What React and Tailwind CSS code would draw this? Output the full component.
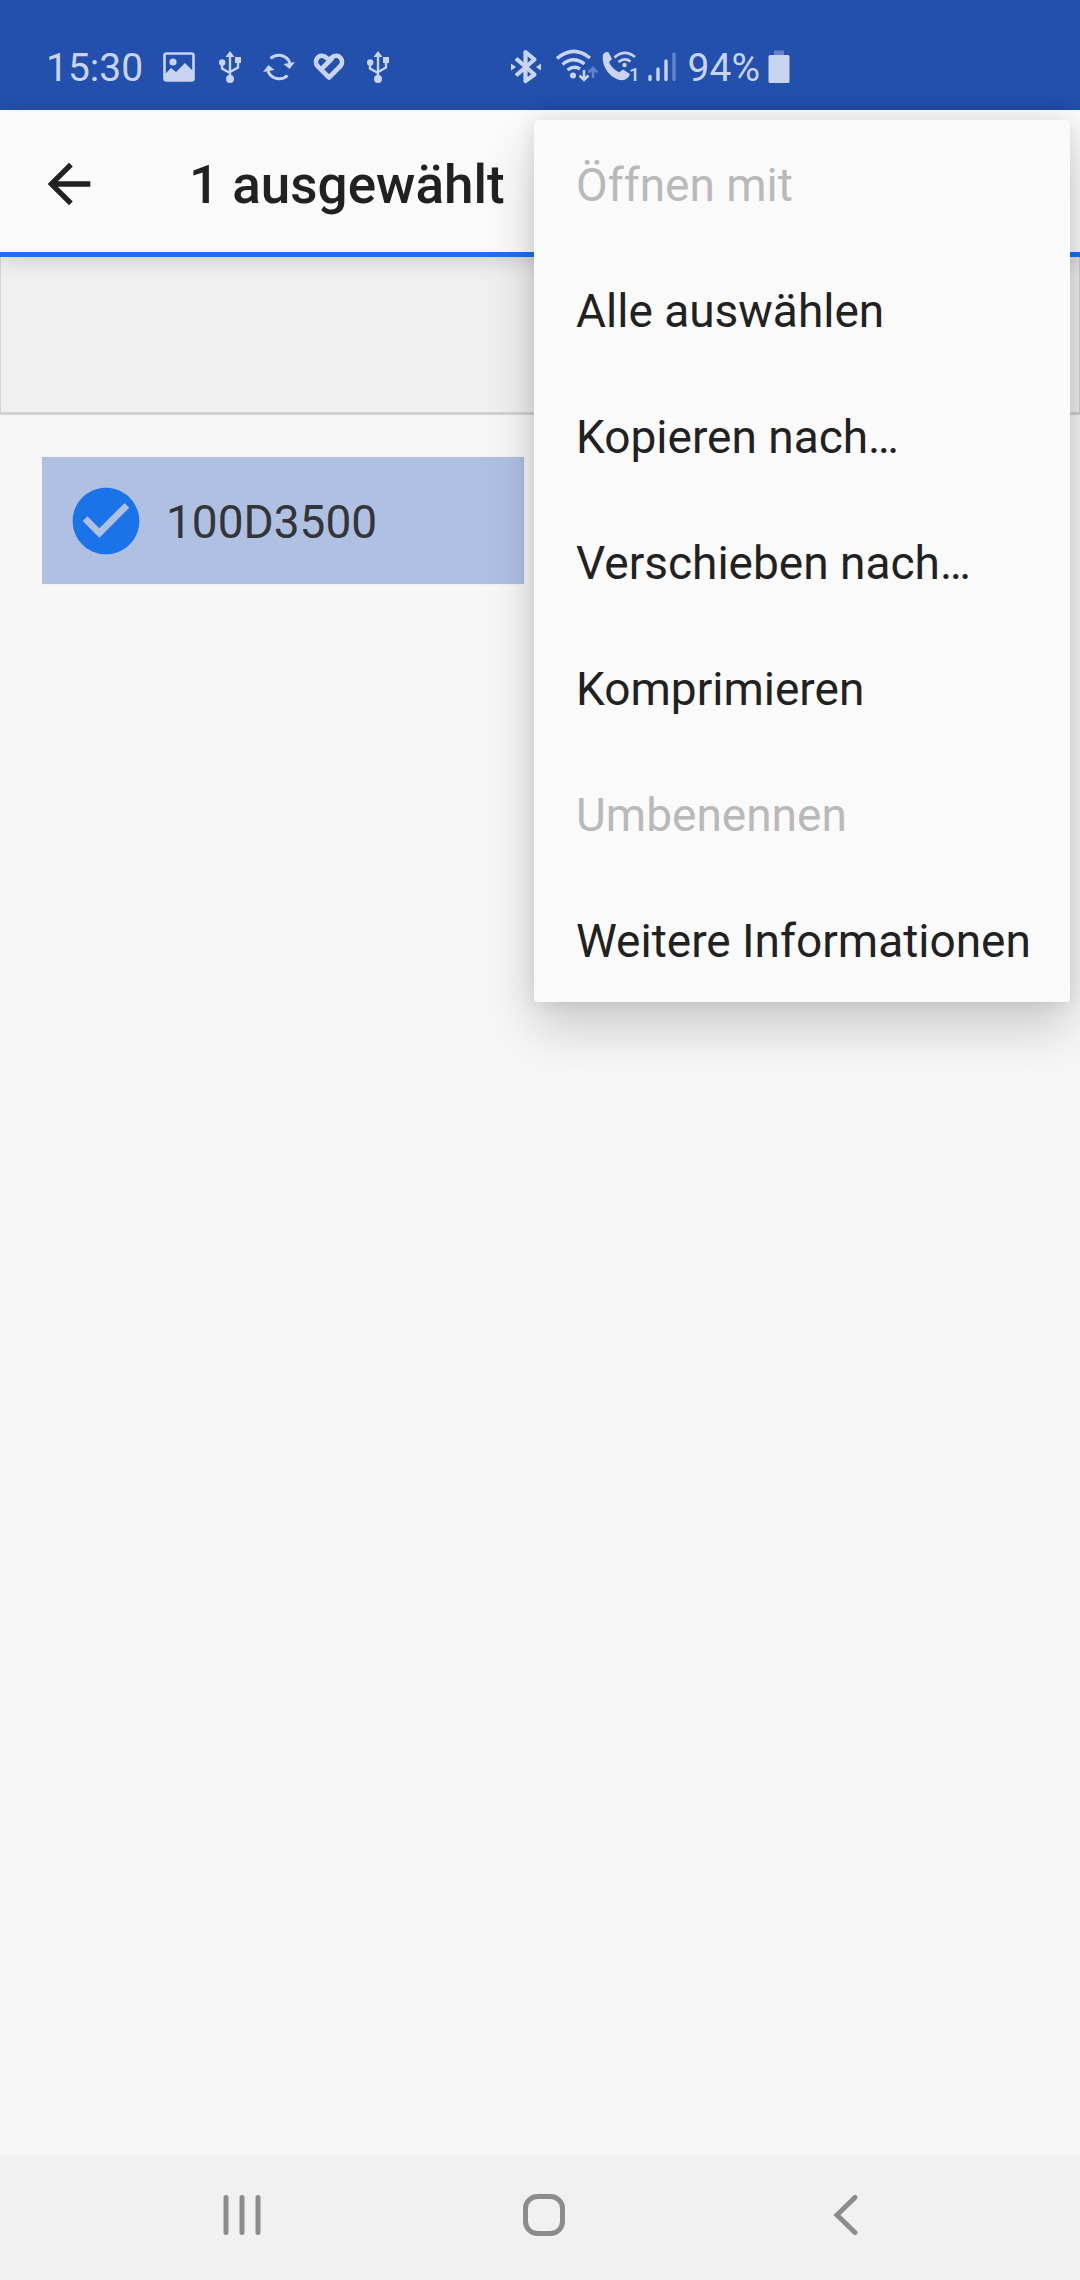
import React from "react";

const menuItems = [
  { label: "Öffnen mit", disabled: true },
  { label: "Alle auswählen" },
  { label: "Kopieren nach…" },
  { label: "Verschieben nach…" },
  { label: "Komprimieren" },
  { label: "Umbenennen", disabled: true },
  { label: "Weitere Informationen" },
];

function StatusIcon({ width, label, children }) {
  return (
    <svg width={width} height="36" viewBox={`0 0 ${width} 36`} fill="none" role="img" aria-label={label} className="shrink-0">
      {children}
    </svg>
  );
}

function ImageIcon() {
  return (
    <StatusIcon width={32} label="Bild">
      <rect x="1.5" y="4.5" width="29" height="27" rx="2" stroke="currentColor" strokeWidth="2.6" />
      <circle cx="10" cy="13" r="3.6" fill="currentColor" />
      <path d="M1 26l7-7 5 4 9-9 9 9v9H1z" fill="currentColor" />
    </StatusIcon>
  );
}

function UsbIcon() {
  return (
    <StatusIcon width={22} label="USB">
      <path d="M11 4v26M3 13v6.500l8 4.500M19 12v6.500L11 23" stroke="currentColor" strokeWidth="2.4" />
      <path d="M11 2l4.500 6h-9z" fill="currentColor" />
      <circle cx="3.2" cy="13.500" r="3.2" fill="currentColor" />
      <path d="M16 8h6v6h-6z" fill="currentColor" />
      <circle cx="11" cy="30" r="4" fill="currentColor" />
    </StatusIcon>
  );
}

function SyncIcon() {
  return (
    <StatusIcon width={32} label="Synchronisierung">
      <path d="M7.500 9.500A12 12 0 0 1 27 14M24.500 26.500A12 12 0 0 1 5 22" stroke="currentColor" strokeWidth="3" />
      <path d="M20.500 15L32 13l-5.500 7zM11.500 21L0 23l5.500-7z" fill="currentColor" />
    </StatusIcon>
  );
}

function HeartIcon() {
  return (
    <StatusIcon width={32} label="Gesundheit">
      <path
        d="M16 28.500L4.500 17C0 11 6.500 4 12.500 8L16 11 19.500 8C25.500 4 32 11 27.500 17zM8.500 20L19.500 9"
        stroke="currentColor"
        strokeWidth="4.6"
        strokeLinejoin="round"
      />
    </StatusIcon>
  );
}

function BluetoothIcon() {
  return (
    <StatusIcon width={30} label="Bluetooth">
      <path d="M5 9.500l18.500 16L14.500 32V3l9 7.500L5 26.500" stroke="currentColor" strokeWidth="4.2" strokeLinejoin="round" />
      <path d="M0 14.500l5 3.500-5 3.500zM30 14.500L25 18l5 3.500z" fill="currentColor" />
    </StatusIcon>
  );
}

function WifiIcon() {
  return (
    <StatusIcon width={42} label="WLAN">
      <path d="M1 9.500Q17.500-4.500 34 9M6.500 15.500Q17.500 6.500 28.500 15M11.500 21Q18 16 24 20" stroke="currentColor" strokeWidth="3.4" />
      <circle cx="17" cy="26.500" r="3" fill="currentColor" />
      <path d="M28 21v10M23.500 26.500L28 31l4.500-4.500" stroke="currentColor" strokeWidth="2.6" />
      <path d="M37 29V19M32.500 23.500L37 19l4.500 4.500" stroke="currentColor" strokeWidth="2.6" opacity=".4" />
    </StatusIcon>
  );
}

function CallIcon() {
  return (
    <StatusIcon width={38} label="WLAN-Anruf 1">
      <path
        d="M1 5.500Q3 2.500 6.500 3.200L10 10 7 13Q9.500 19.500 17 23.200L21 20.500 28 25Q26 31 20 31.300C8 30-1 17 1 5.500z"
        fill="currentColor"
      />
      <path d="M12.500 8.500Q22.500-.5 33 8M16.500 13Q22.500 8 28.500 12.500" stroke="currentColor" strokeWidth="2.8" />
      <circle cx="22.500" cy="16" r="2.200" fill="currentColor" />
      <text x="27" y="32" fontSize="19" fontWeight="500" fill="currentColor">1</text>
    </StatusIcon>
  );
}

function SignalIcon() {
  return (
    <StatusIcon width={28} label="Signalstärke">
      <g stroke="currentColor" strokeWidth="3.4" strokeLinecap="round">
        <path d="M2 27.500v3M10 20v10.500M18 12v18.500" />
        <path d="M26 5v25.500" opacity=".4" />
      </g>
    </StatusIcon>
  );
}

function BatteryIcon() {
  return (
    <StatusIcon width={22} label="Akku">
      <rect x="6" y="1.500" width="10" height="5" fill="currentColor" opacity=".4" />
      <rect x="0.500" y="6" width="21" height="28" rx="1.500" fill="currentColor" />
    </StatusIcon>
  );
}

function StatusBar() {
  return (
    <header className="flex h-[110px] items-center justify-between bg-[#234fad] pt-6 pl-[46px] pr-[290px] text-[39px] leading-none text-[#c8d4f0]">
      <div className="flex items-center">
        <time className="mr-5 pt-0.5">15:30</time>
        <ImageIcon />
        <div className="ml-6 flex items-center gap-[22px]">
          <UsbIcon />
          <div className="flex gap-[18px]">
            <SyncIcon />
            <HeartIcon />
          </div>
          <UsbIcon />
        </div>
      </div>
      <div className="flex items-center">
        <BluetoothIcon />
        <div className="ml-[15px] flex items-center gap-1">
          <WifiIcon />
          <CallIcon />
        </div>
        <div className="ml-2 flex items-center gap-3">
          <SignalIcon />
          <span className="pt-0.5">94%</span>
        </div>
        <div className="ml-2 flex">
          <BatteryIcon />
        </div>
      </div>
    </header>
  );
}

function OverflowMenu() {
  return (
    <div
      role="menu"
      className="absolute top-2.5 right-2.5 z-20 flex w-[536px] flex-col rounded bg-[#fafafa] shadow-[0_26px_52px_rgba(0,0,0,0.18),0_0_20px_rgba(0,0,0,0.1)]"
    >
      {menuItems.map((item) => (
        <button
          key={item.label}
          type="button"
          role="menuitem"
          disabled={item.disabled}
          className="h-[126px] px-[42px] pt-1 text-left text-[46px] whitespace-nowrap text-[#212121] disabled:text-[#b9b9b9]"
        >
          {item.label}
        </button>
      ))}
    </div>
  );
}

function Toolbar() {
  return (
    <div className="relative z-10 flex h-[147px] items-center border-b-[5px] border-[#1a73e8] bg-[#fafafa] pt-1.5 pl-[37px] shadow-[0_4px_20px_rgba(0,0,0,0.14)]">
      <button type="button" aria-label="Zurück" className="text-[#212121]">
        <svg width="64" height="64" viewBox="0 0 24 24" fill="currentColor">
          <path d="M20 11H7.830l5.590-5.590L12 4l-8 8 8 8 1.410-1.410L7.830 13H20v-2z" />
        </svg>
      </button>
      <h1 className="ml-[88px] pt-1 text-[53px] font-medium text-[#212121]">1 ausgewählt</h1>
    </div>
  );
}

function FolderTile({ name }) {
  return (
    <button
      type="button"
      aria-pressed="true"
      className="flex h-[127px] items-center bg-[#b0c0e3] pl-6 text-[46px] text-[#333539] ring-1 ring-black/[0.02]"
    >
      <svg width="80" height="80" viewBox="0 0 24 24" className="shrink-0 text-[#1a73e8]" fill="currentColor">
        <path d="M12 2C6.480 2 2 6.480 2 12s4.480 10 10 10 10-4.480 10-10S17.520 2 12 2zm-2 15l-5-5 1.410-1.410L10 14.170l7.590-7.590L19 8l-9 9z" />
      </svg>
      <span className="ml-5 pt-1">{name}</span>
    </button>
  );
}

function NavBar() {
  return (
    <nav className="flex h-[126px] items-stretch justify-center bg-[#f1f1f1] pb-1 pl-2 text-[#8c8c8c]">
      <button type="button" aria-label="Letzte Apps" className="flex w-[302px] items-center justify-center">
        <svg width="44" height="44" viewBox="0 0 44 44" fill="none" stroke="currentColor" strokeWidth="5" strokeLinecap="round">
          <path d="M6 4.500v35M22 4.500v35M38 4.500v35" />
        </svg>
      </button>
      <button type="button" aria-label="Startbildschirm" className="flex w-[302px] items-center justify-center">
        <svg width="44" height="44" viewBox="0 0 44 44" fill="none" stroke="currentColor" strokeWidth="5">
          <rect x="3.500" y="3.500" width="37" height="37" rx="12" />
        </svg>
      </button>
      <button type="button" aria-label="Zurück" className="flex w-[302px] items-center justify-center">
        <svg width="44" height="44" viewBox="0 0 44 44" fill="none" stroke="currentColor" strokeWidth="5" strokeLinecap="round">
          <path d="M31 4.500L13 22l18 17.500" />
        </svg>
      </button>
    </nav>
  );
}

export default function App() {
  return (
    <div className="flex min-h-screen flex-col bg-[#f7f7f7] font-[Roboto,sans-serif]">
      <StatusBar />
      <div className="relative flex flex-1 flex-col">
        <Toolbar />
        <div className="h-[158px] border-x border-b-[3px] border-[#d3d3d3] bg-[#f0f0f0]" />
        <main className="grid flex-1 grid-cols-2 content-start gap-8 px-[42px] pt-[42px]">
          <FolderTile name="100D3500" />
        </main>
        <OverflowMenu />
      </div>
      <NavBar />
    </div>
  );
}
